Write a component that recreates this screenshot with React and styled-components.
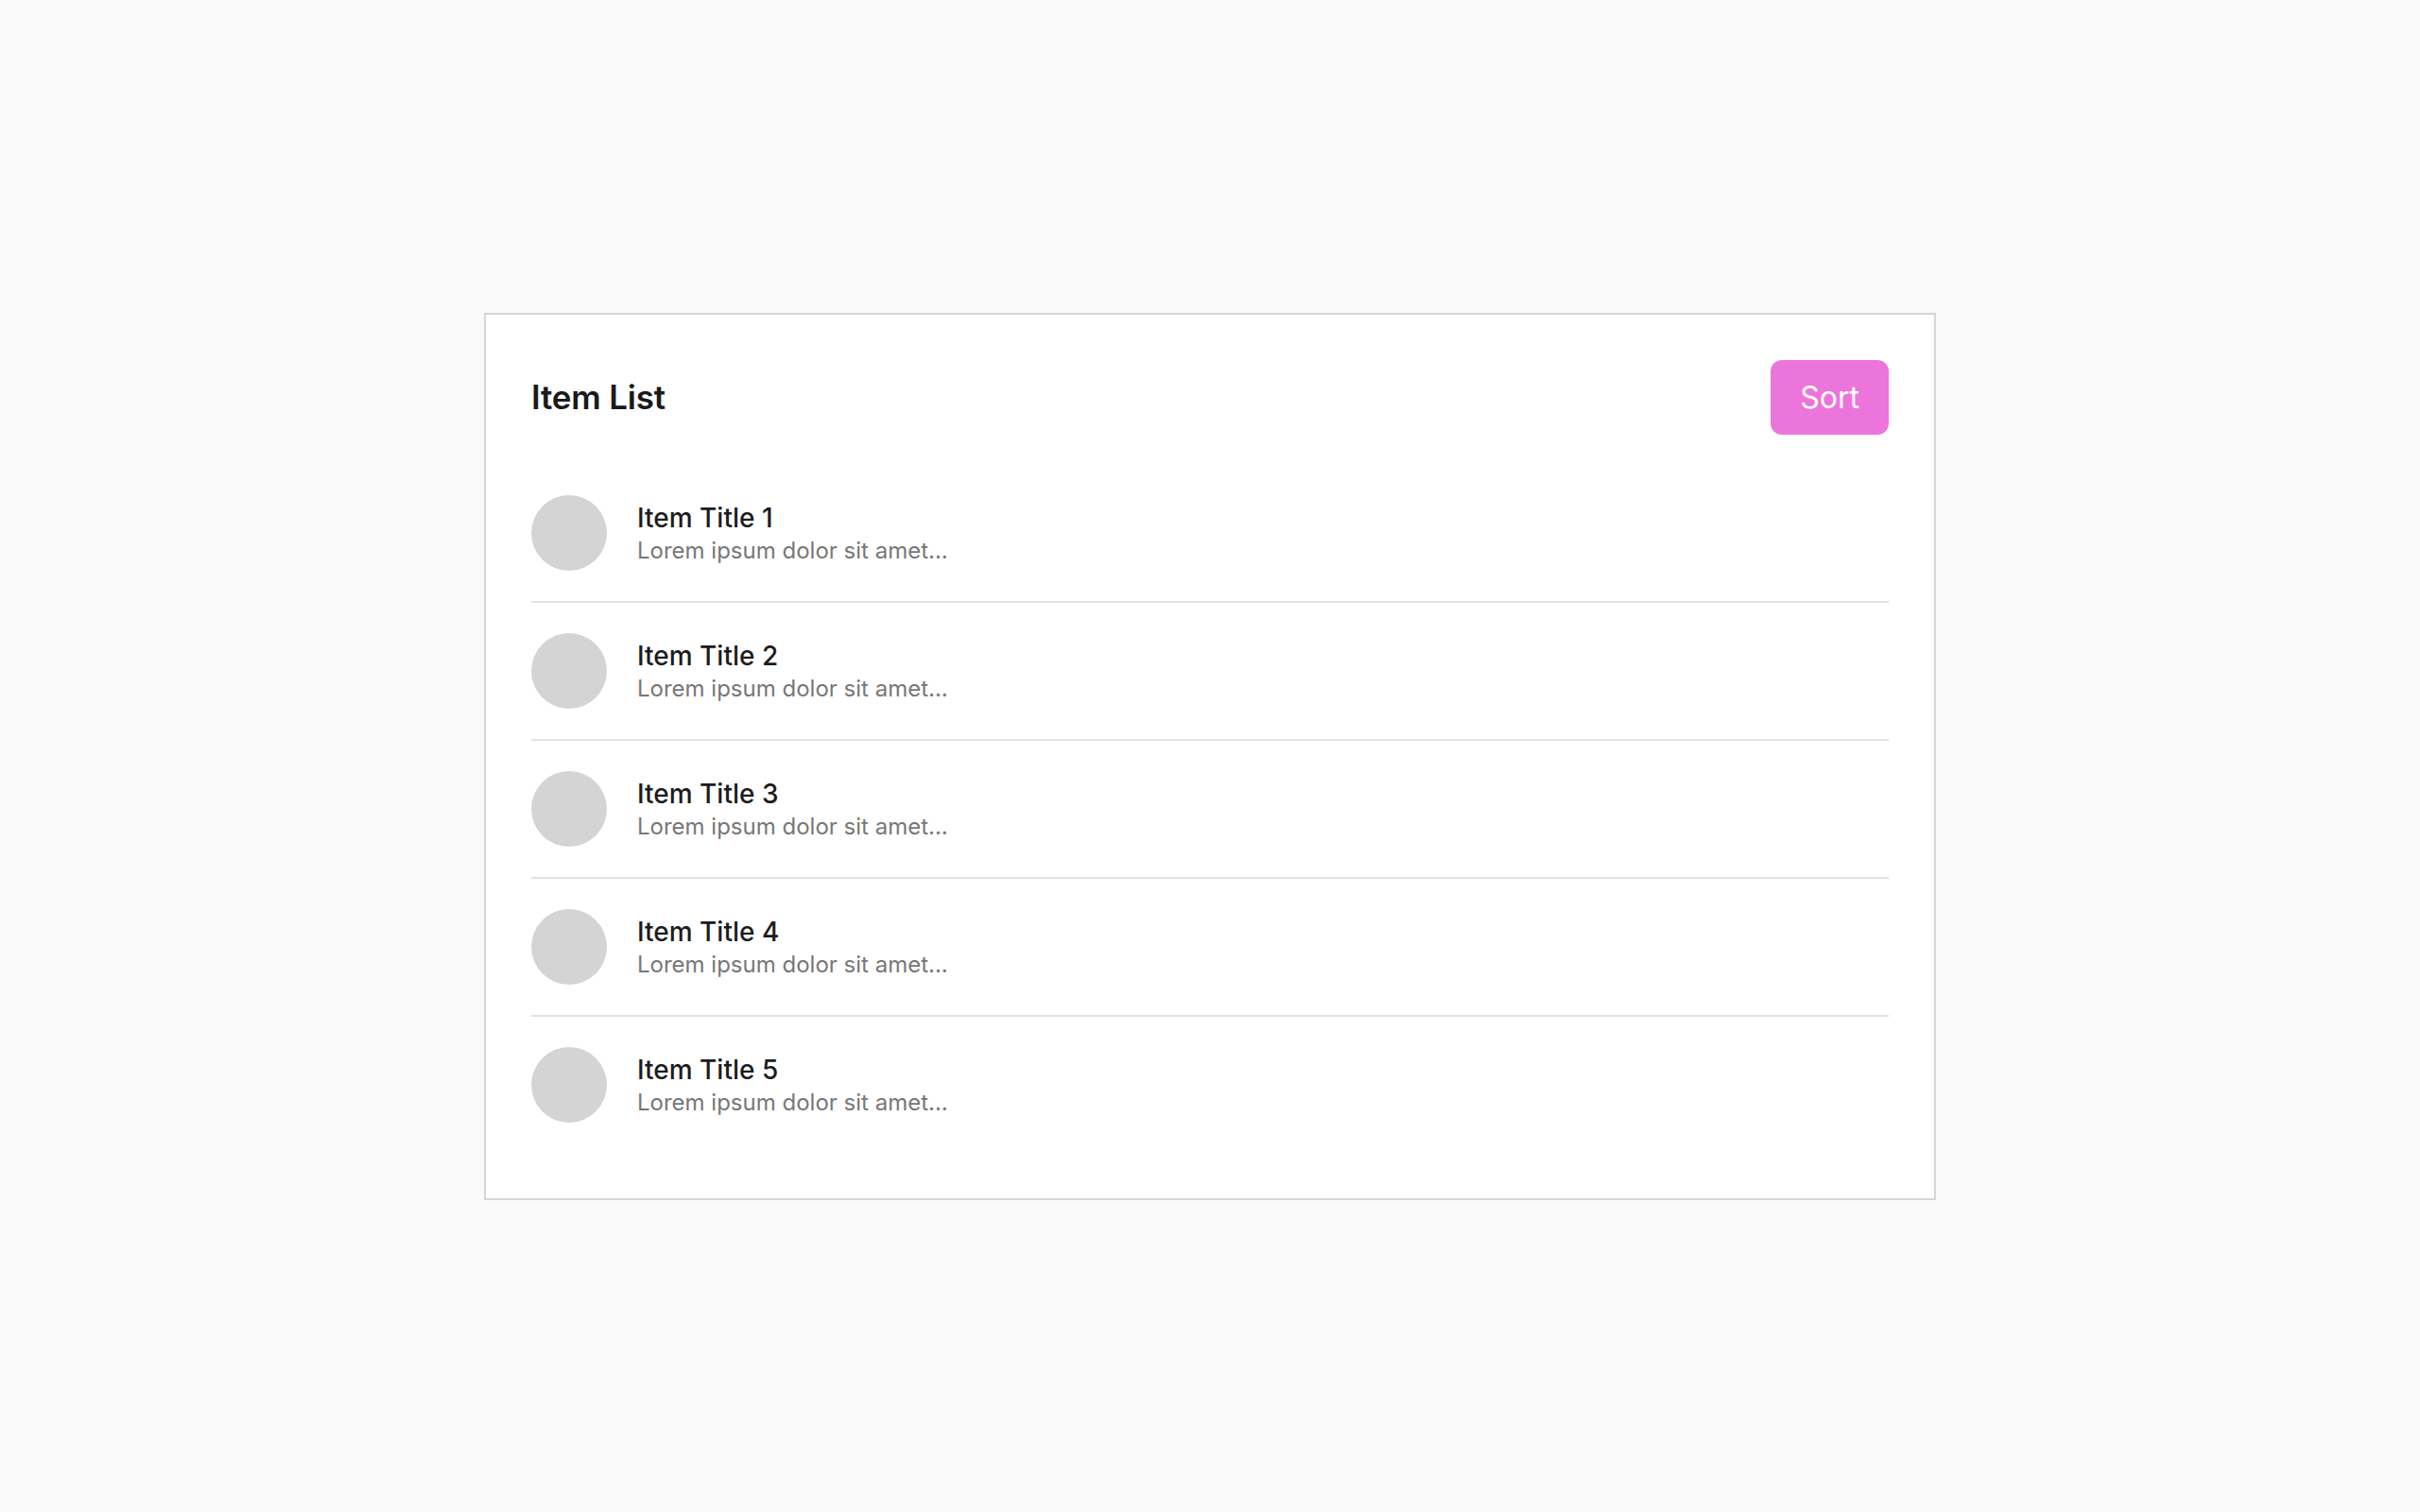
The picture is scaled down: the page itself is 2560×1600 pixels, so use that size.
import React from 'react';
import styled, { createGlobalStyle } from 'styled-components';

const GlobalStyle = createGlobalStyle`
  html, body {
    margin: 0;
    padding: 0;
    background: #fafafa;
  }
  body {
    font-family: Inter, "Noto Sans", "Liberation Sans", sans-serif;
  }
`;

const Page = styled.main`
  min-height: 100vh;
  display: flex;
  align-items: center;
  justify-content: center;
`;

const Card = styled.section`
  box-sizing: border-box;
  width: 1536px;
  background: #fff;
  border: 2px solid #d6d6d6;
  padding: 48px;
`;

const Header = styled.header`
  display: flex;
  align-items: center;
  justify-content: space-between;
  margin-bottom: 32px;
`;

const Heading = styled.h2`
  margin: 0;
  font-size: 35px;
  font-weight: 600;
  letter-spacing: -0.2px;
  color: #1a1a1a;
`;

const SortButton = styled.button`
  font-family: inherit;
  font-size: 32px;
  line-height: 47px;
  padding: 16px 31px;
  border: 0;
  border-radius: 12px;
  background: #ec75db;
  color: #fff;
  cursor: pointer;
`;

const List = styled.ul`
  list-style: none;
  margin: 0;
  padding: 0;
`;

const Row = styled.li`
  display: flex;
  align-items: center;
  gap: 32px;
  padding: 32px 0;
  border-bottom: ${p => (p.$last ? 'none' : '2px solid #e3e3e3')};
`;

const Avatar = styled.div`
  flex: none;
  width: 80px;
  height: 80px;
  border-radius: 50%;
  background: #d4d4d4;
`;

const Text = styled.div`
  display: flex;
  flex-direction: column;
  gap: 4px;
  padding-top: 3px;
`;

const Title = styled.span`
  font-size: 28px;
  line-height: 1.2;
  font-weight: 450;
  color: #1c1c1c;
`;

const Desc = styled.span`
  font-size: 24px;
  line-height: 1.2;
  color: #777;
`;

const items = [1, 2, 3, 4, 5];

export default function App() {
  return (
    <>
      <GlobalStyle />
      <Page>
        <Card>
          <Header>
            <Heading>Item List</Heading>
            <SortButton>Sort</SortButton>
          </Header>
          <List>
            {items.map((n, i) => (
              <Row key={n} $last={i === items.length - 1}>
                <Avatar />
                <Text>
                  <Title>Item Title {n}</Title>
                  <Desc>Lorem ipsum dolor sit amet...</Desc>
                </Text>
              </Row>
            ))}
          </List>
        </Card>
      </Page>
    </>
  );
}
